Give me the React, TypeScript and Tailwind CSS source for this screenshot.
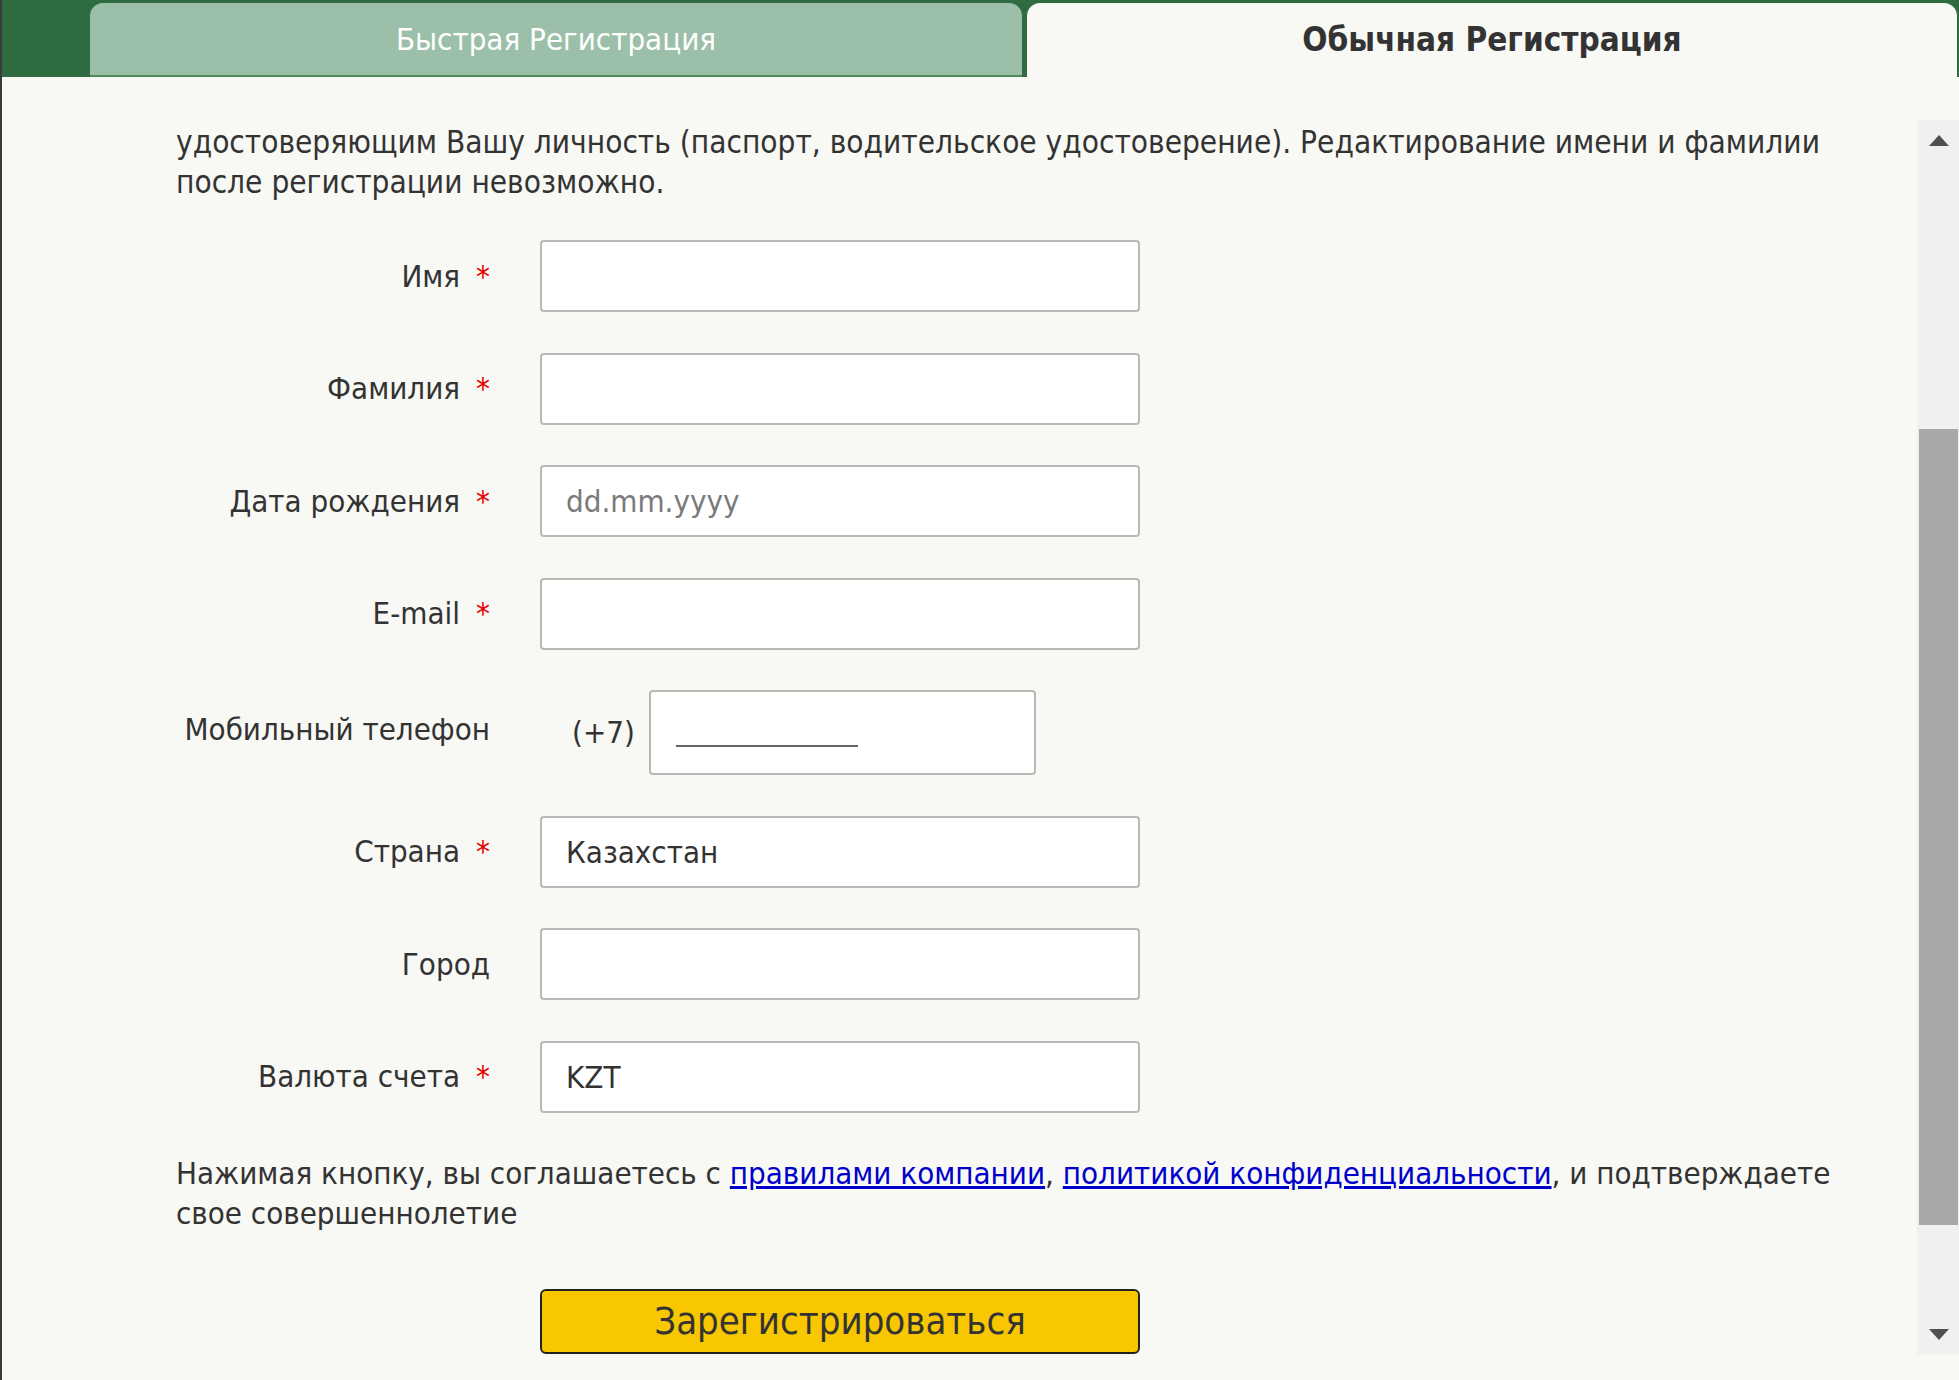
import React from 'react';

const font = { fontFamily: '"DejaVu Sans Condensed", "DejaVu Sans", sans-serif' };

type Field = {
  label: string;
  required?: boolean;
  value?: string;
  placeholder?: string;
};

const fieldsTop: Field[] = [
  { label: 'Имя', required: true },
  { label: 'Фамилия', required: true },
  { label: 'Дата рождения', required: true, placeholder: 'dd.mm.yyyy' },
  { label: 'E-mail', required: true },
];

const fieldsBottom: Field[] = [
  { label: 'Страна', required: true, value: 'Казахстан' },
  { label: 'Город' },
  { label: 'Валюта счета', required: true, value: 'KZT' },
];

const Label: React.FC<{ text: string; required?: boolean }> = ({ text, required }) => (
  <div className="w-[488px] shrink-0 text-right text-[31px] text-[#333]">
    {text}
    {required && <span className="ml-[16px] text-[#e30000]">*</span>}
  </div>
);

const FormRow: React.FC<{ field: Field }> = ({ field }) => (
  <div className="flex items-center">
    <Label text={field.label} required={field.required} />
    <input
      readOnly
      defaultValue={field.value}
      placeholder={field.placeholder}
      className="ml-[50px] w-[600px] h-[72px] bg-white border-2 border-[#b9b9b4] rounded-[4px] px-[24px] text-[31px] text-[#333] placeholder:text-[#7a7a7a] outline-none"
      style={font}
    />
  </div>
);

const Scrollbar: React.FC = () => (
  <div className="w-[42px] shrink-0 mt-[43px] mb-[25px] bg-[#f0f0f0] flex flex-col">
    <div className="h-[41px] flex items-center justify-center pl-[2px]">
      <svg width="20" height="11" viewBox="0 0 20 11">
        <polygon points="10,0 20,11 0,11" fill="#505050" />
      </svg>
    </div>
    <div className="h-[268px]" />
    <div className="h-[796px] ml-[2px] mr-[1px] bg-[#a8a8a8]" />
    <div className="flex-1" />
    <div className="h-[41px] flex items-center justify-center pl-[2px]">
      <svg width="20" height="11" viewBox="0 0 20 11">
        <polygon points="0,0 20,0 10,11" fill="#505050" />
      </svg>
    </div>
  </div>
);

export default function App() {
  return (
    <div className="w-[1959px] h-[1380px] bg-[#f8f8f4] flex overflow-hidden" style={font}>
      <div className="w-[2px] shrink-0 bg-[#3a3a3a]" />
      <div className="flex-1 flex flex-col">
        <div className="h-[77px] bg-[#2e6b40] flex items-end pl-[88px] gap-[5px] pr-[2px]">
          <div className="w-[932px] h-[74px] rounded-t-[13px] bg-[#9bbfa8] border-b-2 border-[#4f8a5f] flex items-center justify-center text-white text-[31px]">
            Быстрая Регистрация
          </div>
          <div className="flex-1 h-[74px] rounded-t-[13px] bg-[#f8f8f4] flex items-center justify-center text-[#333] text-[33px] font-bold">
            Обычная Регистрация
          </div>
        </div>
        <div className="flex-1 flex">
          <div className="flex-1 overflow-hidden pl-[174px] pt-[45px]">
            <p className="w-[1700px] text-[31.3px] leading-[40px] text-[#333]">
              удостоверяющим Вашу личность (паспорт, водительское удостоверение). Редактирование имени и фамилии
              после регистрации невозможно.
            </p>
            <div className="-ml-[174px] mt-[38px] flex flex-col gap-[40.5px]">
              {fieldsTop.map((f) => (
                <FormRow key={f.label} field={f} />
              ))}
              <div className="flex items-center">
                <div className="pb-[6px]">
                  <Label text="Мобильный телефон" />
                </div>
                <div className="ml-[50px] flex items-center">
                  <span className="pl-[32px] text-[31px] text-[#333]">(+7)</span>
                  <div className="ml-[14px] w-[387px] h-[85px] bg-white border-2 border-[#b9b9b4] rounded-[4px] flex items-end pl-[25px] pb-[26px]">
                    <div className="w-[182px] h-[2px] bg-[#666]" />
                  </div>
                </div>
              </div>
              {fieldsBottom.map((f) => (
                <FormRow key={f.label} field={f} />
              ))}
            </div>
            <p className="mt-[40px] w-[1700px] text-[31px] leading-[40px] text-[#333]">
              Нажимая кнопку, вы соглашаетесь с{' '}
              <a href="#" className="text-[#0000cc] underline">правилами компании</a>,{' '}
              <a href="#" className="text-[#0000cc] underline">политикой конфиденциальности</a>, и подтверждаете
              свое совершеннолетие
            </p>
            <button
              className="mt-[56px] ml-[364px] w-[600px] h-[65px] bg-[#f8c700] border-2 border-[#222] rounded-[6px] text-[38px] text-[#333]"
              style={font}
            >
              Зарегистрироваться
            </button>
          </div>
          <Scrollbar />
        </div>
      </div>
    </div>
  );
}
